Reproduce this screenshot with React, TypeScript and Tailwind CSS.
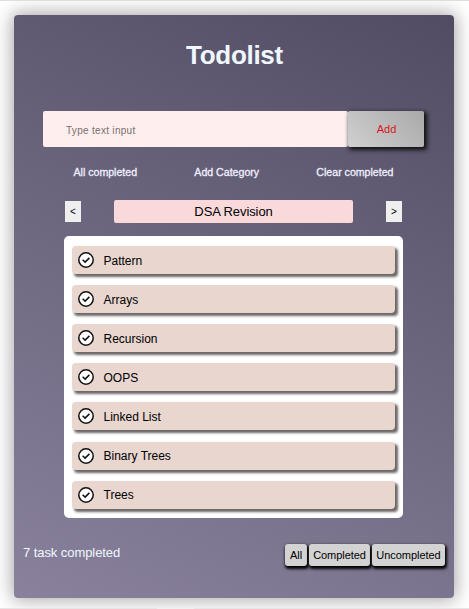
const tasks = ["Pattern", "Arrays", "Recursion", "OOPS", "Linked List", "Binary Trees", "Trees"];

function CheckIcon() {
  return (
    <svg className="ml-[6px] size-[16px] shrink-0" viewBox="0 0 16 16" fill="none">
      <circle cx="8" cy="8" r="7.2" fill="#fff" stroke="#111" strokeWidth="1.5" />
      <path d="M4.6 7.8 7.1 10.1 11.4 5.9" stroke="#111" strokeWidth="1.5" />
    </svg>
  );
}

function FilterButton({ label, width }: { label: string; width: string }) {
  return (
    <button
      className={`${width} h-[22px] rounded-[3px] bg-[#d3d3d3] text-[11px] tracking-[-0.05px] whitespace-nowrap text-black shadow-[1px_2px_3px_1px_#000]`}
    >
      {label}
    </button>
  );
}

export default function App() {
  return (
    <div className="flex h-[609px] w-[469px] flex-col overflow-hidden border-t border-[#dfdde3] bg-white font-['Liberation_Sans',Arial,sans-serif]">
      <main className="mt-[14px] ml-[14px] flex h-[583px] w-[440px] shrink-0 flex-col rounded-[4px] bg-[linear-gradient(24deg,#8a829d_0%,#514c63_100%)] shadow-[0_0_18px_2px_#aaa5a5]">
        <h1 className="mt-[24px] h-[32px] pl-px text-center text-[26px] leading-[32px] font-bold tracking-[-0.3px] text-[#f0f8ff]">
          Todolist
        </h1>
        <div className="mt-[40px] ml-[29px] flex h-[36px] w-[381px]">
          <input
            placeholder="Type text input"
            className="h-[36px] w-[305px] rounded-[2px] bg-[#ffeeee] pt-[3px] pl-[23px] text-[10px] tracking-[0.3px] outline-none placeholder:text-[#757070]"
          />
          <button className="h-[36px] w-[76px] rounded-[2px] bg-[linear-gradient(45deg,#d0d0d0,#a9a9a9)] pl-px text-[11px] text-[#dc1420] shadow-[2px_2px_4px_1px_#111]">
            Add
          </button>
        </div>
        <div className="mt-[17px] ml-[59.5px] flex h-[16px] w-[320px] justify-between text-[10.6px] leading-[16px] text-[#f0f0ff] [-webkit-text-stroke:0.3px_#f0f0ff]">
          <span>All completed</span>
          <span>Add Category</span>
          <span>Clear completed</span>
        </div>
        <div className="mt-[20px] ml-[51px] flex h-[23px] w-[337px] items-center justify-between">
          <button className="h-[21px] w-[16px] bg-[#efefef] text-[10px] text-black">&lt;</button>
          <div className="h-[23px] w-[239px] rounded-[2px] bg-[#fad9db] text-center text-[13px] leading-[23px] tracking-[-0.1px] text-black">
            DSA Revision
          </div>
          <button className="h-[21px] w-[16px] bg-[#efefef] text-[10px] text-black">&gt;</button>
        </div>
        <ul className="mt-[13px] ml-[50px] flex h-[282px] w-[339px] flex-col gap-[11.12px] rounded-[5px] bg-white pt-[10px] pl-[8px]">
          {tasks.map((task) => (
            <li
              key={task}
              className="flex h-[28px] w-[323px] shrink-0 items-center rounded-[4px] bg-[#e8d6cf] text-[12px] text-black shadow-[2.5px_2.5px_2.5px_0px_#6b6766]"
            >
              <CheckIcon />
              <span className="ml-[9.5px] pt-[1.4px]">{task}</span>
            </li>
          ))}
        </ul>
        <footer className="mt-[26px] flex h-[22px] justify-between pr-[9px] pl-[9px]">
          <span className="text-[13px] leading-[18px] tracking-[-0.07px] text-[#f0f8ff]">7 task completed</span>
          <div className="flex gap-[2px]">
            <FilterButton label="All" width="w-[22px]" />
            <FilterButton label="Completed" width="w-[61px]" />
            <FilterButton label="Uncompleted" width="w-[73px]" />
          </div>
        </footer>
      </main>
      <div className="mt-auto flex h-px shrink-0 justify-between">
        <div className="w-[157px] bg-[#e7e5e5]" />
        <div className="w-[275px] bg-[#e7e5e5]" />
      </div>
    </div>
  );
}
